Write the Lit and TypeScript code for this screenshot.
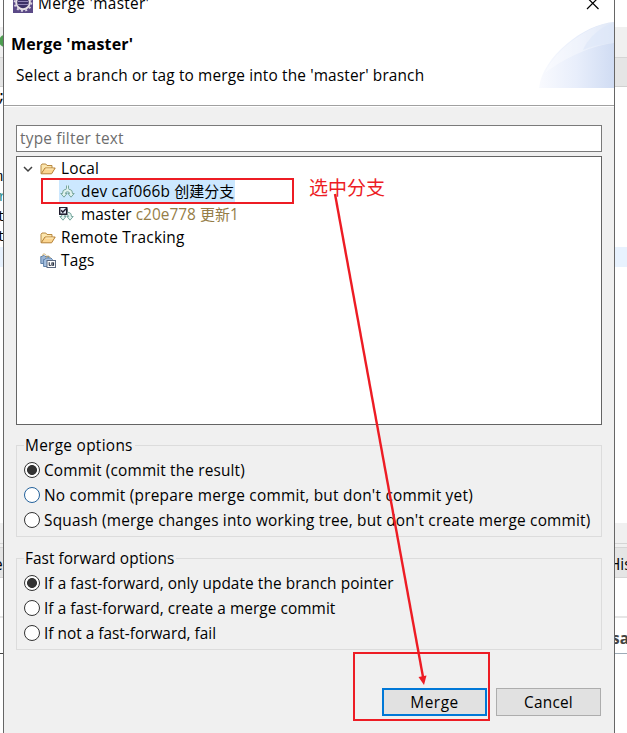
import { LitElement, html, svg, css } from "lit";
import { customElement, property } from "lit/decorators.js";
import { classMap } from "lit/directives/class-map.js";

const fork = svg`
  <path d="M6.5 1.5V4.5Q6.5 5.5 5 5.5 2.5 5.8 2.5 9.5H.8L4 13.2 7 9.5H5.4Q5.4 7.8 7.5 7.8 9.6 7.8 9.6 9.5H8L11 13.2 14.2 9.5H12.5Q12.5 5.8 10 5.5 8.5 5.5 8.5 4.5V1.5" fill="#e2f3f0" stroke="#76a59c"/>`;

@customElement("tree-icon")
class TreeIcon extends LitElement {
  @property() kind = "folder";
  static styles = css`
    :host { display: block; width: 16px; height: 16px; flex: none; }
    svg { display: block; }
  `;
  render() {
    let body: unknown;
    if (this.kind === "folder") {
      body = svg`
        <path d="M1 12.6V4.4L2 3H5.8L7 4.5H12V7" fill="#fbe6ae" stroke="#b98a42"/>
        <path d="M1.2 12.8 5 7H15.2L11.6 12.8z" fill="#fbd590" stroke="#b47f35"/>
        <path d="M5.5 8H13.5" stroke="#fff0c4"/>`;
    } else if (this.kind === "branch") {
      body = fork;
    } else if (this.kind === "current") {
      body = svg`${fork}
        <rect x=".7" y=".2" width="7" height="7" fill="#e8f0fa" stroke="#1d1b2c" stroke-width="1.5"/>
        <path d="M2.2 3.2 3.8 5.2 7 1.8" fill="none" stroke="#1d1b2c" stroke-width="1.5"/>`;
    } else {
      body = svg`
        <path d="M.8 3.5h1.5L3.5 2 5 3.5h4V10.5H.8z" fill="#9ab5d6" stroke="#5f80a8"/>
        <path d="M2.4 3c0-2.6 3-2.6 3.8-.4" fill="none" stroke="#cfae6c"/>
        <path d="M3.6 6.5h1.2L6.2 5h4.8L12.4 6.5V13.5H3.6z" fill="#a5c0e0" stroke="#5f80a8"/>
        <path d="M6.2 5c0-2.6 3.4-2.6 4-.2" fill="none" stroke="#cfae6c"/>
        <rect x="7" y="7.5" width="8.5" height="7" fill="#fff" stroke="#5a6880"/>
        <path d="M9.2 9.2v3.2h1.6" fill="none" stroke="#1b2436"/>
        <rect x="11.9" y="9.9" width="1.7" height="2.3" fill="none" stroke="#1b2436"/>`;
    }
    return html`<svg width="16" height="16" viewBox="0 0 16 16">${body}</svg>`;
  }
}

interface Option { label: string; checked?: boolean; hot?: boolean; fit?: string }

@customElement("option-group")
class OptionGroup extends LitElement {
  @property() heading = "";
  @property({ attribute: false }) options: Option[] = [];
  static styles = css`
    :host { display: block; box-sizing: border-box; height: 92px; border: 1px solid #dcdcdc; padding: 0 0 0 7px; }
    .title { display: block; width: max-content; height: 21px; line-height: 21px; margin-top: -11px; padding: 0 2px 0 1px; background: #f0f0f0; letter-spacing: var(--title-spacing, .3px); }
    .list { margin-top: 2px; }
    .row { display: flex; align-items: center; height: 25px; gap: 4px; white-space: nowrap; }
    .dot { box-sizing: border-box; width: 16px; height: 16px; flex: none; margin-top: -1px; border: 1.2px solid #333; border-radius: 50%; background: #fff; }
    .dot.on { background: radial-gradient(circle, #333 0 4.6px, #fff 5.3px); }
    .dot.hot { border-color: #24629c; }
    .snug { letter-spacing: .07px; }
    .normal { letter-spacing: .15px; }
    .loose { letter-spacing: .2px; }
    .looser { letter-spacing: .24px; }
  `;
  render() {
    return html`<span class="title">${this.heading}</span>
      <div class="list">${this.options.map((o) => html`
        <div class="row">
          <span class=${classMap({ dot: true, on: !!o.checked, hot: !!o.hot })}></span>
          <span class=${o.fit ?? ""}>${o.label}</span>
        </div>`)}</div>`;
  }
}

@customElement("app-root")
class AppRoot extends LitElement {
  static styles = css`
    :host {
      display: grid; grid-template-columns: 3px 612px 12px; position: relative;
      width: 627px; height: 733px; overflow: hidden; background: #fff; color: #000;
      font: 15.4px/23px "Open Sans", "Noto Sans", "Noto Sans CJK SC", sans-serif;
    }
    .side { overflow: hidden; height: 733px; display: flex; flex-direction: column; white-space: nowrap; }
    .side > div { flex: none; overflow: hidden; box-sizing: border-box; }
    .g27 { height: 27px; }
    .bar { height: 31px; background: #f0f0f0; border-bottom: 1px solid #d5d5d5; }
    .tab { height: 29px; background: #e5e5e5; border-bottom: 1px solid #d0d0d0; }
    .green { width: 12px; height: 12px; margin: 8px 0 0 -1px; border-radius: 50%; background: #4d9d50; }
    .code { height: 160px; padding-top: 1px; font: 15px/20px "Liberation Mono", monospace; }
    .code span { display: block; margin-left: -6px; height: 20px; }
    .code .first { height: 80px; margin-left: -3px; }
    .code .teal { color: #2a8c8c; margin-left: -2px; }
    .code .t { margin-left: -3px; }
    .hl { height: 20px; background: #e8f2fe; }
    .g256 { height: 256px; }
    .strip { height: 25px; background: #f0f0f0; border-bottom: 1px solid #d5d5d5; }
    .strip::after { content: ""; display: block; height: 1px; margin-top: 20px; background: #d5d5d5; }
    .tab2 { height: 30px; background: #e5e5e5; border-bottom: 1px solid #d5d5d5; line-height: 33px; }
    .tab2 span { margin-left: -6px; }
    .g40 { height: 40px; border-bottom: 2px solid #e6e6e6; }
    .cell { height: 36px; border-bottom: 1px solid #9eacb8; font-weight: 700; color: #444; line-height: 41px; }
    .cell span { margin-left: -3px; }
    .left .cell { border-color: #444; }
    .dialog { box-sizing: border-box; border: solid #666; border-width: 0 1px; height: 733px; background: #f0f0f0; display: flex; flex-direction: column; overflow: hidden; }
    .head { flex: none; display: grid; grid-template-columns: 1fr auto; box-sizing: border-box; height: 106px; background: #fff; border-bottom: 1px solid #a0a0a0; }
    .caption { display: flex; height: 14px; gap: 5px; padding-left: 9px; align-items: flex-end; }
    .caption svg { display: block; }
    .caption span { line-height: 22px; height: 21px; letter-spacing: .3px; }
    .h1 { margin: 17px 0 0 7px; font-weight: 700; line-height: 26px; height: 26px; font-size: 16px; letter-spacing: .15px; }
    .sub { margin: 7px 0 0 12px; line-height: 23px; letter-spacing: .15px; }
    .right { display: flex; flex-direction: column; align-items: flex-end; }
    .close { display: block; margin: -3px 14px 0 0; }
    .swoosh { display: block; margin-top: 9px; }
    .body { padding: 18px 12px 0; border-top: 1px solid #fff; }
    .filter { box-sizing: border-box; height: 27px; border: 1px solid #7a7a7a; background: #fff; line-height: 25px; padding-left: 3px; color: #6d6d6d; letter-spacing: .22px; }
    .tree { box-sizing: border-box; height: 269px; margin-top: 4px; border: 1px solid #646464; background: #fff; letter-spacing: .22px; }
    .node { display: flex; align-items: center; height: 23px; padding-left: 23px; gap: 5px; white-space: nowrap; }
    .node.top { padding-left: 6px; gap: 7px; }
    .node.top > div { display: flex; gap: 5px; align-items: center; }
    .child { padding-left: 42px; }
    .sel { display: flex; gap: 5px; align-items: center; height: 23px; width: 176px; background: #cce8ff; }
    .sel tree-icon { margin-left: 1px; }
    .child.node { gap: 6px; letter-spacing: .02px; }
    .cjk { font-size: 15px; letter-spacing: 0; }
    .dim { color: #957d47; }
    option-group { margin-top: 20px; }
    option-group + option-group { margin-top: 21px; --title-spacing: .05px; }
    .foot { display: flex; justify-content: flex-end; gap: 9px; margin: 38px 0 0; padding-right: 1px; }
    .btn { box-sizing: border-box; width: 105px; height: 28px; background: #e1e1e1; border: 1px solid #adadad; text-align: center; line-height: 27px; letter-spacing: .2px; }
    .btn.main { border: 2px solid #0078d7; line-height: 25px; letter-spacing: .5px; }
    .note { position: absolute; left: 309px; top: 175px; font: 19px/24px "Noto Sans CJK SC", sans-serif; color: #ed1c24; }
    .marks { position: absolute; inset: 0; }
  `;

  render() {
    return html`
      <div class="side left">
        <div class="g27"></div><div class="bar"><div class="green"></div></div><div class="tab"></div>
        <div class="code"><span class="first">;</span><span>m</span><span class="teal">r</span><span class="t">t</span><span class="t">t</span></div>
        <div class="hl"></div><div class="g256"></div><div class="strip"></div>
        <div class="tab2"><span>e</span></div><div class="g40"></div><div class="cell"></div>
      </div>
      <div class="dialog">
        <div class="head">
          <div>
            <div class="caption">
              <svg width="20" height="14" viewBox="0 0 20 14">
                <rect width="20" height="13" fill="#5b4a87"/>
                <circle cx="10" cy="2.5" r="8.4" fill="none" stroke="#ddd6e4" stroke-width="1.8" stroke-dasharray="2 2.4"/>
                <circle cx="10" cy="2.5" r="6.8" fill="#3d3166" stroke="#e6e0e4" stroke-width="2"/>
                <path d="M5 1.5h10M5 4.5h10" stroke="#9184b4"/>
              </svg>
              <span>Merge 'master'</span>
            </div>
            <div class="h1">Merge 'master'</div>
            <div class="sub">Select a branch or tag to merge into the 'master' branch</div>
          </div>
          <div class="right">
            <svg class="close" width="14" height="16" viewBox="0 0 14 16"><path d="M1 .5 12.5 12M12.5.5 1 12" stroke="#000" stroke-width="1.2"/></svg>
            <svg class="swoosh" width="75" height="66" viewBox="0 0 75 66">
              <defs><linearGradient id="g"><stop offset="0" stop-color="#f9fafe"/><stop offset=".5" stop-color="#e8eefb"/><stop offset="1" stop-color="#d0dcf3"/></linearGradient></defs>
              <path d="M0 66C3 35 45 2 75 0V66z" fill="url(#g)"/>
              <path d="M6 51C16 28 50 2 75 0V21C48 24 20 40 6 51z" fill="#fff" opacity=".35"/>
              <path d="M44 28C50 14 65 3 75 1V21Q58 22 44 28z" fill="#dce6f8" opacity=".6"/>
            </svg>
          </div>
        </div>
        <div class="body">
          <div class="filter">type filter text</div>
          <div class="tree">
            <div class="node top">
              <svg width="10" height="8" viewBox="0 0 10 8"><path d="M1 2l4 4 4-4" fill="none" stroke="#404040" stroke-width="1.5"/></svg>
              <div><tree-icon kind="folder"></tree-icon><span>Local</span></div>
            </div>
            <div class="child"><div class="sel"><tree-icon kind="branch"></tree-icon><span>dev caf066b <span class="cjk">创建分支</span></span></div></div>
            <div class="child node"><tree-icon kind="current"></tree-icon><span>master <span class="dim">c20e778 <span class="cjk">更新</span>1</span></span></div>
            <div class="node"><tree-icon kind="folder"></tree-icon><span>Remote Tracking</span></div>
            <div class="node"><tree-icon kind="tags"></tree-icon><span>Tags</span></div>
          </div>
          <option-group heading="Merge options" .options=${[
            { label: "Commit (commit the result)", checked: true, fit: "normal" },
            { label: "No commit (prepare merge commit, but don't commit yet)", hot: true, fit: "looser" },
            { label: "Squash (merge changes into working tree, but don't create merge commit)", fit: "loose" },
          ]}></option-group>
          <option-group heading="Fast forward options" .options=${[
            { label: "If a fast-forward, only update the branch pointer", checked: true, fit: "snug" },
            { label: "If a fast-forward, create a merge commit", fit: "snug" },
            { label: "If not a fast-forward, fail" },
          ]}></option-group>
          <div class="foot"><div class="btn main">Merge</div><div class="btn">Cancel</div></div>
        </div>
      </div>
      <div class="side">
        <div class="g27"></div><div class="bar"></div><div class="tab"></div><div class="code"></div>
        <div class="hl"></div><div class="g256"></div><div class="strip"></div>
        <div class="tab2"><span>His</span></div><div class="g40"></div><div class="cell"><span>sa</span></div>
      </div>
      <div class="note">选中分支</div>
      <svg class="marks" width="627" height="733" viewBox="0 0 627 733">
        <g fill="none" stroke="#ed1c24" stroke-width="2">
          <rect x="42" y="179" width="251" height="24"/>
          <rect x="354" y="653" width="135" height="67"/>
          <path d="M335 194 423 677" stroke-width="2.4"/>
        </g>
        <path d="M424 685 418.5 677 426.5 675.5z" fill="#ed1c24"/>
      </svg>`;
  }
}
